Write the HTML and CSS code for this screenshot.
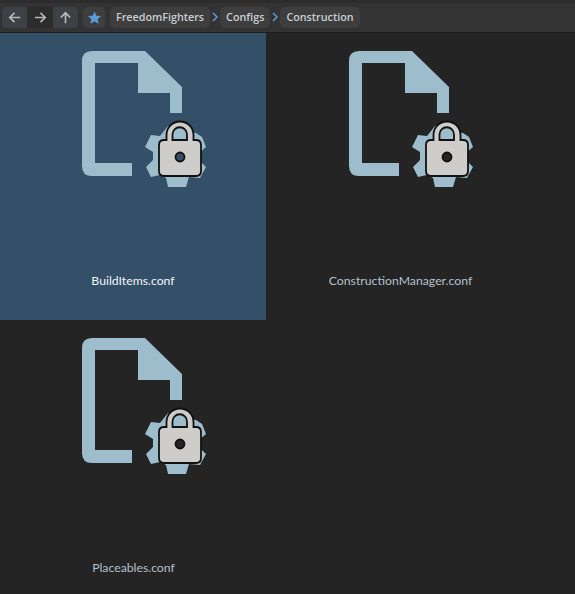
FILE: index.html
```html
<!DOCTYPE html>
<html lang="en">
<head>
<meta charset="utf-8">
<title>Construction</title>
<link rel="stylesheet" href="styles.css">
</head>
<body>
<svg class="defs" width="0" height="0" aria-hidden="true">
  <symbol id="conf" viewBox="70 40 150 160">
    <path class="doc" fill-rule="evenodd" d="M92 51H145L182 87V113H170V93H138V63H95V163H132V176H92Q82 176 82 166V61Q82 51 92 51Z"/>
    <path class="doc" d="M168 126 L186 126 L189 132 L196 133 L202 137 L206 147 L199 153 L199 160 L206 167 L200 178 L189 177 L186 187 L168 187 L166 178 L160 175 L151 177 L146 167 L153 160 L153 152 L145 147 L151 135 L160 136 Z"/>
    <path class="lock" fill-rule="evenodd" d="M166.500 140V135A13.500 13.500 0 0 1 193.500 135V140H196Q201 140 201 145V171Q201 176 196 176H164Q159 176 159 171V145Q159 140 164 140ZM172.500 140H187V134.500A7.250 7.250 0 0 0 172.500 134.500Z"/>
    <circle class="hole" cx="180" cy="157" r="4.500"/>
  </symbol>
</svg>
<header class="toolbar">
  <div class="nav-group">
    <button class="nav"><svg viewBox="0 0 16 16"><path d="M14 8H3M8 3 3 8l5 5"/></svg></button>
    <button class="nav nav-mid"><svg viewBox="0 0 16 16"><path d="M2 8h11M8 3l5 5-5 5"/></svg></button>
    <button class="nav"><svg viewBox="0 0 16 16"><path d="M8 14V3M3 8l5-5 5 5"/></svg></button>
  </div>
  <button class="fav"><svg viewBox="0 0 16 16"><path d="M8 1.500 10 6l5 .5-3.700 3.300 1.100 4.900L8 12.200l-4.400 2.500 1.100-4.900L1 6.500 6 6Z"/></svg></button>
  <nav class="crumbs">
    <span class="crumb">FreedomFighters</span>
    <svg class="sep" viewBox="0 0 8 12"><path d="M2 2l4 4-4 4"/></svg>
    <span class="crumb">Configs</span>
    <svg class="sep" viewBox="0 0 8 12"><path d="M2 2l4 4-4 4"/></svg>
    <span class="crumb">Construction</span>
  </nav>
</header>
<main class="grid">
  <div class="cell selected"><svg class="icon"><use href="#conf"/></svg><div class="name">BuildItems.conf</div></div>
  <div class="cell"><svg class="icon"><use href="#conf"/></svg><div class="name">ConstructionManager.conf</div></div>
  <div class="cell"><svg class="icon"><use href="#conf"/></svg><div class="name">Placeables.conf</div></div>
</main>
</body>
</html>
```
FILE: styles.css
```css
* { box-sizing: border-box; }
html, body { margin: 0; height: 100%; overflow: hidden; }
body { background: #242424; font-family: "Open Sans", "Noto Sans", sans-serif; }
.defs { position: absolute; }
.toolbar { height: 33px; background: #333333; border-top: 3px solid #2c2c2c; border-bottom: 1px solid #1c1c1c; display: flex; align-items: center; padding: 0 0 1px 2px; gap: 5px; }
.nav-group { display: flex; height: 21px; border-radius: 5px; overflow: hidden; background: #3b3f43; }
.nav { width: 25px; height: 21px; padding: 0; border: 0; background: #3d4145; display: flex; align-items: center; justify-content: center; }
.nav-mid { background: #2c2c2c; width: 26px; }
.nav svg { width: 15px; height: 15px; fill: none; stroke: #b4b8bb; stroke-width: 1.8; }
.fav { width: 22px; height: 21px; padding: 0; border: 0; border-radius: 5px; background: #3e3e3e; display: flex; align-items: center; justify-content: center; }
.fav svg { width: 15px; height: 15px; fill: #5b9bd5; }
.crumbs { display: flex; align-items: center; }
.crumb { height: 21px; line-height: 20px; padding: 0 6px; border-radius: 5px; background: #3e3e3e; color: #c9ced3; font-size: 10.750px; font-weight: 600; white-space: nowrap; }
.sep { width: 8px; height: 12px; margin: 0 1px; fill: none; stroke: #5b9bd5; stroke-width: 1.5; }
.grid { display: grid; grid-template-columns: 267px 267px; grid-auto-rows: 287px; --bg: #242424; }
.cell { display: flex; flex-direction: column; padding: 7px 0 0 0; }
.selected { background: #344f68; margin-right: 1px; --bg: #344f68; }
.icon { display: block; width: 150px; height: 160px; margin-left: 70px; flex: none; }
.doc { fill: #9dbdcc; }
.lock { fill: #cfcdc9; stroke: #111; stroke-width: 1.800; }
.hole { fill: var(--bg); stroke: #111; stroke-width: 1.800; }
.name { margin-top: 72px; text-align: center; font-family: Lato, "Open Sans", sans-serif; font-size: 12.250px; line-height: 18px; color: #b4c0cc; }
.selected .name { color: #f2f6fa; }
```
